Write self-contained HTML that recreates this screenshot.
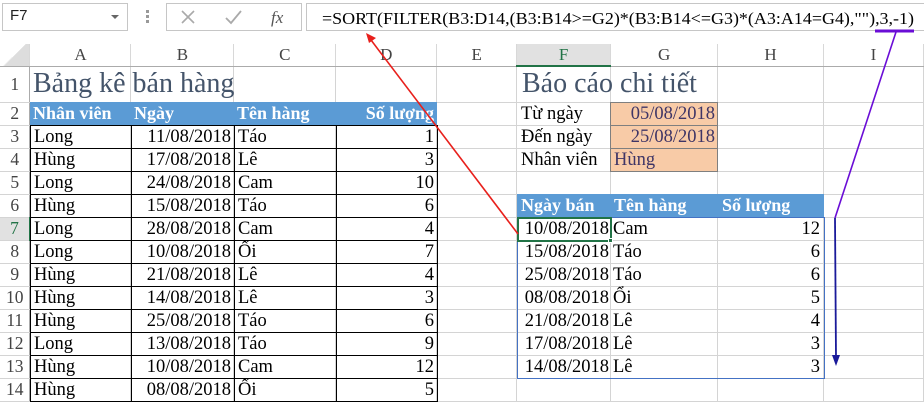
<!DOCTYPE html>
<html><head><meta charset="utf-8">
<style>
*{margin:0;padding:0;box-sizing:border-box}
body{width:924px;height:405px;overflow:hidden;background:#fff;position:relative;font-family:"Liberation Serif","Noto Serif CJK SC",serif;font-size:18.5px;color:#000}
.abs{position:absolute}
table{border-collapse:collapse;table-layout:fixed}
#grid{position:absolute;left:0;top:44px}
#grid td{border-right:1px solid #d4d4d4;border-bottom:1px solid #d4d4d4;padding:0}
#grid tr.ch td{text-align:center;color:#444;font-size:17px;border-bottom:1px solid #ababab;border-right:1px solid #d8d8d8}
#grid td.rh{text-align:center;color:#444;font-size:17.5px;border-right:1px solid #ababab}
.dt td{border:1px solid #000;height:23px;padding:0 3px;white-space:nowrap;overflow:hidden;line-height:21px}
.r{text-align:right}
.hdr{background:#5b9bd5;color:#fff;font-weight:bold;height:23px;line-height:23px;white-space:nowrap;font-size:18px}
</style></head><body>

<div class="abs" style="left:2px;top:3px;width:126px;height:28px;border:1px solid #c6c6c6"></div>
<div class="abs" style="left:10px;top:7px;font-family:'Liberation Sans',sans-serif;font-size:15px;color:#222">F7</div>
<div class="abs" style="left:111px;top:15px;width:0;height:0;border-left:4px solid transparent;border-right:4px solid transparent;border-top:4px solid #666"></div>
<div class="abs" style="left:146px;top:10px;width:3px;height:14px;background:repeating-linear-gradient(#999 0 3px,transparent 3px 5px)"></div>
<div class="abs" style="left:166px;top:3px;width:136px;height:28px;border:1px solid #c6c6c6"></div>
<svg class="abs" style="left:166px;top:3px" width="136" height="28">
<path d="M16 8 L28 20 M28 8 L16 20" stroke="#aaa" stroke-width="1.6" fill="none"/>
<path d="M60 15 L65 20 L75 8" stroke="#aaa" stroke-width="1.8" fill="none"/>
<text x="105" y="20" font-family="Liberation Serif" font-style="italic" font-size="17" fill="#555">fx</text>
</svg>
<div class="abs" style="left:306px;top:3px;width:618px;height:28px;border:1px solid #c6c6c6;border-right:none"></div>
<svg class="abs" style="left:0;top:0" width="924" height="40">
<text x="322" y="24" font-family="Liberation Serif" font-size="17" textLength="592" lengthAdjust="spacingAndGlyphs">=SORT(FILTER(B3:D14,(B3:B14&gt;=G2)*(B3:B14&lt;=G3)*(A3:A14=G4),""),3,-1)</text>
</svg>

<table id="grid">
<colgroup><col style="width:30px"><col style="width:101px"><col style="width:103px"><col style="width:102px"><col style="width:101px"><col style="width:80px"><col style="width:94px"><col style="width:107px"><col style="width:106px"><col style="width:100px"></colgroup>
<tr class="ch" style="height:22px"><td style="background:linear-gradient(135deg,#fff 50%,#ddd 50%)"></td><td>A</td><td>B</td><td>C</td><td>D</td><td>E</td><td style="background:#e1e1e1;color:#217346;border-bottom:2px solid #217346">F</td><td>G</td><td>H</td><td>I</td></tr>
<tr style="height:36px"><td class="rh">1</td><td></td><td></td><td></td><td></td><td></td><td></td><td></td><td></td><td></td></tr>
<tr style="height:23px"><td class="rh">2</td><td></td><td></td><td></td><td></td><td></td><td></td><td></td><td></td><td></td></tr>
<tr style="height:23px"><td class="rh">3</td><td></td><td></td><td></td><td></td><td></td><td></td><td></td><td></td><td></td></tr>
<tr style="height:23px"><td class="rh">4</td><td></td><td></td><td></td><td></td><td></td><td></td><td></td><td></td><td></td></tr>
<tr style="height:23px"><td class="rh">5</td><td></td><td></td><td></td><td></td><td></td><td></td><td></td><td></td><td></td></tr>
<tr style="height:23px"><td class="rh">6</td><td></td><td></td><td></td><td></td><td></td><td></td><td></td><td></td><td></td></tr>
<tr style="height:23px"><td class="rh" style="background:#e1e1e1;color:#217346;border-right:2px solid #217346">7</td><td></td><td></td><td></td><td></td><td></td><td></td><td></td><td></td><td></td></tr>
<tr style="height:23px"><td class="rh">8</td><td></td><td></td><td></td><td></td><td></td><td></td><td></td><td></td><td></td></tr>
<tr style="height:23px"><td class="rh">9</td><td></td><td></td><td></td><td></td><td></td><td></td><td></td><td></td><td></td></tr>
<tr style="height:23px"><td class="rh">10</td><td></td><td></td><td></td><td></td><td></td><td></td><td></td><td></td><td></td></tr>
<tr style="height:23px"><td class="rh">11</td><td></td><td></td><td></td><td></td><td></td><td></td><td></td><td></td><td></td></tr>
<tr style="height:23px"><td class="rh">12</td><td></td><td></td><td></td><td></td><td></td><td></td><td></td><td></td><td></td></tr>
<tr style="height:23px"><td class="rh">13</td><td></td><td></td><td></td><td></td><td></td><td></td><td></td><td></td><td></td></tr>
<tr style="height:23px"><td class="rh">14</td><td></td><td></td><td></td><td></td><td></td><td></td><td></td><td></td><td></td></tr>
</table>

<div class="abs" style="left:33px;top:68px;font-size:28px;color:#44546a;white-space:nowrap">Bảng kê bán hàng</div>
<div class="abs" style="left:522px;top:68px;font-size:28px;color:#44546a;white-space:nowrap">Báo cáo chi tiết</div>

<div class="abs hdr" style="left:30px;top:102px;width:407px">
<span class="abs" style="left:3px">Nhân viên</span><span class="abs" style="left:104px">Ngày</span><span class="abs" style="left:207px">Tên hàng</span><span class="abs" style="right:3px">Số lượng</span>
</div>
<table class="abs dt" style="left:30px;top:125px;width:407px">
<colgroup><col style="width:101px"><col style="width:103px"><col style="width:102px"><col style="width:101px"></colgroup>
<tr><td>Long</td><td class="r">11/08/2018</td><td>Táo</td><td class="r">1</td></tr>
<tr><td>Hùng</td><td class="r">17/08/2018</td><td>Lê</td><td class="r">3</td></tr>
<tr><td>Long</td><td class="r">24/08/2018</td><td>Cam</td><td class="r">10</td></tr>
<tr><td>Hùng</td><td class="r">15/08/2018</td><td>Táo</td><td class="r">6</td></tr>
<tr><td>Long</td><td class="r">28/08/2018</td><td>Cam</td><td class="r">4</td></tr>
<tr><td>Long</td><td class="r">10/08/2018</td><td>Ổi</td><td class="r">7</td></tr>
<tr><td>Hùng</td><td class="r">21/08/2018</td><td>Lê</td><td class="r">4</td></tr>
<tr><td>Hùng</td><td class="r">14/08/2018</td><td>Lê</td><td class="r">3</td></tr>
<tr><td>Hùng</td><td class="r">25/08/2018</td><td>Táo</td><td class="r">6</td></tr>
<tr><td>Long</td><td class="r">13/08/2018</td><td>Táo</td><td class="r">9</td></tr>
<tr><td>Hùng</td><td class="r">10/08/2018</td><td>Cam</td><td class="r">12</td></tr>
<tr><td>Hùng</td><td class="r">08/08/2018</td><td>Ổi</td><td class="r">5</td></tr>
</table>

<div class="abs" style="left:521px;top:103px;line-height:23px;white-space:nowrap">Từ ngày<br>Đến ngày<br>Nhân viên</div>
<div class="abs" style="left:610px;top:102px;width:108px;height:70px;background:#f8cba7;border:1px solid #7f7f7f"></div>
<div class="abs" style="left:610px;top:125px;width:108px;height:1px;background:#7f7f7f"></div>
<div class="abs" style="left:610px;top:148px;width:108px;height:1px;background:#7f7f7f"></div>
<div class="abs" style="left:611px;top:103px;width:104px;line-height:23px;color:#3f3566;text-align:right">05/08/2018<br>25/08/2018</div>
<div class="abs" style="left:614px;top:149px;line-height:23px;color:#3f3566">Hùng</div>

<div class="abs hdr" style="left:517px;top:194px;width:307px">
<span class="abs" style="left:4px">Ngày bán</span><span class="abs" style="left:97px">Tên hàng</span><span class="abs" style="left:205px">Số lượng</span>
</div>
<div class="abs" style="left:517px;top:217px;width:308px;height:162px;border:1px solid #4472c4"></div>
<div class="abs" style="left:517px;top:218px;line-height:23px;width:92px;text-align:right;white-space:nowrap">10/08/2018<br>15/08/2018<br>25/08/2018<br>08/08/2018<br>21/08/2018<br>17/08/2018<br>14/08/2018</div>
<div class="abs" style="left:613px;top:218px;line-height:23px">Cam<br>Táo<br>Táo<br>Ổi<br>Lê<br>Lê<br>Lê</div>
<div class="abs" style="left:719px;top:218px;line-height:23px;width:101px;text-align:right">12<br>6<br>6<br>5<br>4<br>3<br>3</div>
<div class="abs" style="left:517px;top:217px;width:95px;height:25px;border:2px solid #217346"></div>
<div class="abs" style="left:608px;top:238px;width:5px;height:5px;background:#217346;border:1px solid #fff"></div>

<svg class="abs" style="left:0;top:0" width="924" height="405">
<line x1="518" y1="234" x2="371" y2="40" stroke="#e8201c" stroke-width="1.6"/>
<path d="M366 33 L376 38 L369 43 Z" fill="#e8201c"/>
<line x1="875" y1="31" x2="914" y2="31" stroke="#6a0dd6" stroke-width="3"/>
<line x1="896" y1="32" x2="835" y2="218" stroke="#6a0dd6" stroke-width="1.6"/>
<line x1="835" y1="218" x2="836" y2="358" stroke="#1a1a9a" stroke-width="1.8"/>
<path d="M832 355 L840 355 L836 366 Z" fill="#1a1a9a"/>
</svg>
</body></html>
